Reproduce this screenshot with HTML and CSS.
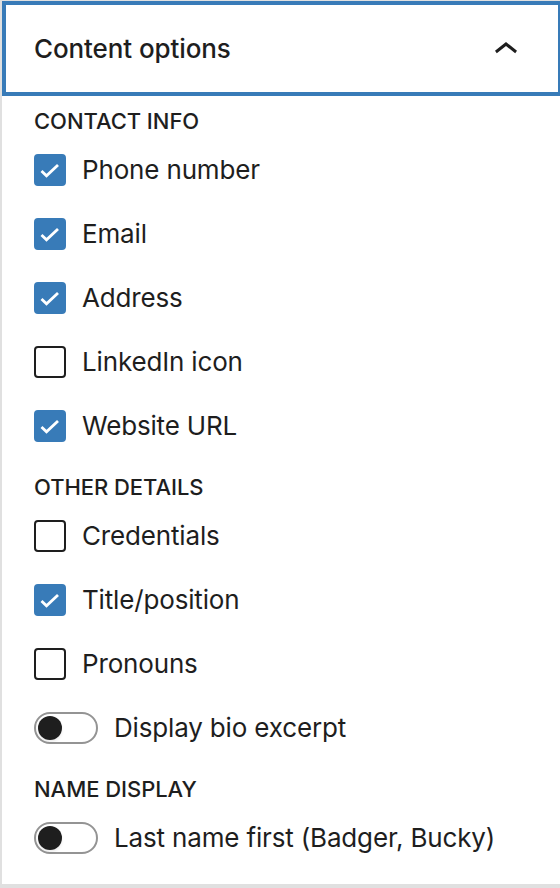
FILE: index.html
```html
<!DOCTYPE html>
<html>
<head>
<meta charset="utf-8">
<link rel="stylesheet" href="styles.css">
</head>
<body>
<div class="sidebar">
  <div class="panel">
    <div class="panel-header">
      <span class="panel-title">Content options</span>
      <svg class="chevron" viewBox="0 0 24 24" width="48" height="48"><path d="M6.5 12.4L12 8l5.5 4.4-.9 1.2L12 10l-4.6 3.6-.9-1.2z" fill="#1e1e1e"/></svg>
    </div>
    <div class="panel-body">
      <div class="group-heading">Contact info</div>
      <div class="option">
        <span class="checkbox checked"><svg viewBox="0 0 32 32" width="32" height="32"><polyline points="7.5,17 12.5,21.8 24,11" /></svg></span>
        <span class="label">Phone number</span>
      </div>
      <div class="option">
        <span class="checkbox checked"><svg viewBox="0 0 32 32" width="32" height="32"><polyline points="7.5,17 12.5,21.8 24,11" /></svg></span>
        <span class="label">Email</span>
      </div>
      <div class="option">
        <span class="checkbox checked"><svg viewBox="0 0 32 32" width="32" height="32"><polyline points="7.5,17 12.5,21.8 24,11" /></svg></span>
        <span class="label">Address</span>
      </div>
      <div class="option">
        <span class="checkbox"></span>
        <span class="label">LinkedIn icon</span>
      </div>
      <div class="option">
        <span class="checkbox checked"><svg viewBox="0 0 32 32" width="32" height="32"><polyline points="7.5,17 12.5,21.8 24,11" /></svg></span>
        <span class="label">Website URL</span>
      </div>

      <div class="group-heading">Other details</div>
      <div class="option">
        <span class="checkbox"></span>
        <span class="label">Credentials</span>
      </div>
      <div class="option">
        <span class="checkbox checked"><svg viewBox="0 0 32 32" width="32" height="32"><polyline points="7.5,17 12.5,21.8 24,11" /></svg></span>
        <span class="label">Title/position</span>
      </div>
      <div class="option">
        <span class="checkbox"></span>
        <span class="label">Pronouns</span>
      </div>
      <div class="option">
        <span class="toggle"><span class="thumb"></span></span>
        <span class="label">Display bio excerpt</span>
      </div>

      <div class="group-heading">Name display</div>
      <div class="option last">
        <span class="toggle"><span class="thumb"></span></span>
        <span class="label">Last name first (Badger, Bucky)</span>
      </div>
    </div>
  </div>
  <div class="next-panel"></div>
</div>
</body>
</html>
```

FILE: styles.css
```css
html, body {
  margin: 0;
  padding: 0;
  background: #fff;
}
body {
  width: 560px;
  height: 888px;
  overflow: hidden;
  font-family: Inter, "Noto Sans", "Liberation Sans", sans-serif;
  color: #1e1e1e;
}
.sidebar {
  border-left: 2px solid #e0e0e0;
  height: 888px;
  box-sizing: border-box;
  display: flex;
  flex-direction: column;
}
.panel {
  width: 560px;
  flex-shrink: 0;
  border-top: 1px solid #e0e0e0;
}
.panel-header {
  height: 95px;
  box-sizing: border-box;
  padding: 0 32px 0 32px;
  display: flex;
  align-items: center;
  justify-content: space-between;
  box-shadow: inset 0 0 0 4px #387bb8;
}
.panel-title {
  font-size: 26px;
  font-weight: 500;
  letter-spacing: -0.1px;
}
.chevron {
  display: block;
  margin-top: 2px;
}
.panel-body {
  padding: 9px 32px 0 32px;
  height: 788px;
  box-sizing: border-box;
}
.group-heading {
  font-size: 22px;
  font-weight: 500;
  text-transform: uppercase;
  line-height: 32px;
  margin-bottom: 17px;
  letter-spacing: -0.05px;
}
.option {
  display: flex;
  align-items: center;
  gap: 16px;
  height: 32px;
  margin-bottom: 32px;
}
.option:has(+ .group-heading) {
  margin-bottom: 29px;
}
.label {
  font-size: 26px;
  line-height: 32px;
  letter-spacing: -0.16px;
}
.checkbox {
  width: 32px;
  height: 32px;
  box-sizing: border-box;
  border: 2px solid #1e1e1e;
  border-radius: 4px;
  flex-shrink: 0;
  background: #fff;
  display: block;
}
.checkbox.checked {
  background: #387bb8;
  border-color: #387bb8;
}
.checkbox svg {
  display: block;
  margin: -2px;
}
.checkbox polyline {
  fill: none;
  stroke: #fff;
  stroke-width: 2.8;
}
.toggle {
  width: 64px;
  height: 32px;
  box-sizing: border-box;
  border: 2px solid #949494;
  border-radius: 16px;
  position: relative;
  flex-shrink: 0;
  display: block;
}
.thumb {
  position: absolute;
  left: 2px;
  top: 2px;
  width: 24px;
  height: 24px;
  border-radius: 50%;
  background: #1e1e1e;
  box-shadow: 0 2px 3px rgba(0,0,0,0.08);
}
.next-panel {
  border-top: 4px solid #e0e0e0;
  flex: 1;
}
```
